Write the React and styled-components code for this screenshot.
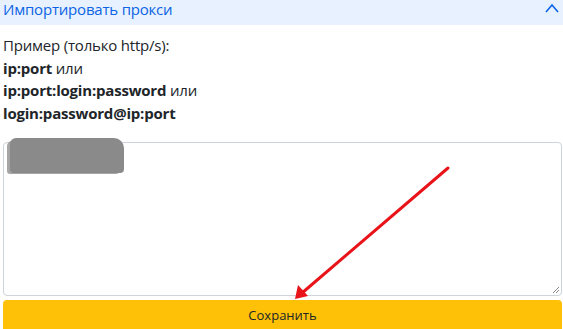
import React from "react";
import styled, { createGlobalStyle } from "styled-components";

const GlobalStyle = createGlobalStyle`
  html, body { margin: 0; padding: 0; background: #fff; }
  body { font-family: "Open Sans", "Noto Sans", sans-serif; color: #212529; overflow: hidden; }
  * { box-sizing: border-box; }
`;

const Page = styled.div`
  position: relative;
  width: 563px;
  height: 329px;
  overflow: hidden;
`;

const Header = styled.div`
  height: 25px;
  background: #e7f1ff;
  display: flex;
  align-items: flex-start;
  justify-content: space-between;
  padding: 0 4px 0 3px;
`;

const Title = styled.div`
  font-size: 15px;
  line-height: 18px;
  color: #0c63e4;
  letter-spacing: -0.2px;
`;

const Chevron = styled.svg`
  margin-top: 3px;
  width: 14px;
  height: 10px;
`;

const Body = styled.div`
  padding: 9px 1px 0 3px;
  display: flex;
  flex-direction: column;
`;

const Line = styled.div`
  font-size: 15px;
  line-height: 22.5px;
  letter-spacing: -0.2px;
  white-space: nowrap;
  b { font-weight: 700; }
`;

const Field = styled.div`
  position: relative;
  margin-top: 18px;
  height: 154px;
  border: 1px solid #ced4da;
  border-radius: 4px;
  background: #fff;
`;

const Blur = styled.div`
  position: absolute;
  left: 6px;
  top: -5px;
  width: 114px;
  height: 35px;
  background: #8a8a8a;
  border-radius: 6px 10px 4px 4px;
  filter: blur(0.6px);
  box-shadow: -4px 2px 0 -1px #a5a5a5;
`;

const Grip = styled.svg`
  position: absolute;
  right: 1px;
  bottom: 1px;
  width: 8px;
  height: 8px;
`;

const SaveButton = styled.button`
  margin-top: 4px;
  height: 34px;
  border: none;
  border-radius: 4px;
  background: #ffc107;
  color: #212529;
  font-family: "Open Sans", "Noto Sans", sans-serif;
  font-size: 13px;
  padding: 0 0 4px;
  cursor: pointer;
`;

const Arrow = styled.svg`
  position: absolute;
  left: 0;
  top: 0;
  pointer-events: none;
`;

export default function App() {
  return (
    <>
      <GlobalStyle />
      <Page>
        <Header>
          <Title>Импортировать прокси</Title>
          <Chevron viewBox="0 0 14 10">
            <path d="M1 9 L7 2 L13 9" fill="none" stroke="#0c63e4" strokeWidth="1.6" />
          </Chevron>
        </Header>
        <Body>
          <Line>Пример (только http/s):</Line>
          <Line><b>ip:port</b> или</Line>
          <Line><b>ip:port:login:password</b> или</Line>
          <Line><b>login:password@ip:port</b></Line>
          <Field>
            <Blur />
            <Grip viewBox="0 0 8 8">
              <path d="M7 1 L1 7 M7 4 L4 7" stroke="#888" strokeWidth="1" />
            </Grip>
          </Field>
          <SaveButton>Сохранить</SaveButton>
        </Body>
        <Arrow width="563" height="329" viewBox="0 0 563 329">
          <line x1="448" y1="168" x2="302" y2="293" stroke="#e8141a" strokeWidth="3" strokeLinecap="round" />
          <path d="M295 299 L298 285 L308 296 Z" fill="#e8141a" />
        </Arrow>
      </Page>
    </>
  );
}
